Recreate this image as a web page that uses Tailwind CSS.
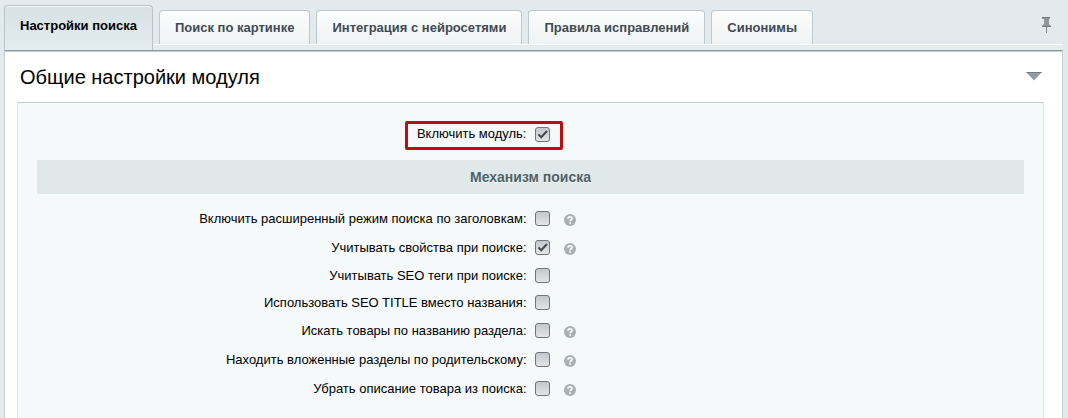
<!DOCTYPE html>
<html lang="ru">
<head>
  <meta charset="UTF-8" />
  <meta name="viewport" content="width=device-width, initial-scale=1.0" />
  <title>Настройки поиска</title>
  <script src="https://cdn.jsdelivr.net/npm/@tailwindcss/browser@4"></script>
</head>
<body class="min-h-screen flex flex-col bg-[#e2eaed] pl-1 pr-[5px] font-['Liberation_Sans',Arial,sans-serif] text-[13px] text-black">
  <svg class="hidden">
    <symbol id="check" viewBox="0 0 15 15">
      <path d="M3.4 7.4 L6.2 10.2 L12 4" fill="none" stroke="#45494d" stroke-width="2" />
    </symbol>
    <symbol id="help" viewBox="0 0 12 12">
      <circle cx="6" cy="6" r="6" fill="#a9b0b3" />
      <path d="M4 4.8 C4 2.2 8.1 2.2 8.1 4.5 C8.1 5.8 6.1 5.7 6.1 7.3" fill="none" stroke="#fff" stroke-width="1.6" />
      <rect x="5.3" y="8.2" width="1.6" height="1.6" fill="#fff" />
    </symbol>
  </svg>

  <!-- Вкладки -->
  <nav class="relative flex items-end gap-[6px] h-[50px] pb-[6px] text-[#3f4b54] font-bold">
    <div class="absolute inset-x-0 bottom-0 h-[6px] border-t border-white bg-[#e4edee]"></div>
    <button class="relative -mb-[6px] h-[45px] px-[15px] pb-1 rounded-t border border-b-0 border-[#b9c4c9] bg-linear-to-b from-[#d7e0e3] to-[#e4edef] text-black shadow-[inset_0_1px_0_#f4f8f9]">Настройки поиска</button>
    <button class="h-[34px] px-[15px] rounded-t border border-b-0 border-[#bcc8cc] bg-linear-to-b from-[#fcfdfd] to-[#eff3f4]">Поиск по картинке</button>
    <button class="h-[34px] px-[15px] rounded-t border border-b-0 border-[#bcc8cc] bg-linear-to-b from-[#fcfdfd] to-[#eff3f4]">Интеграция с нейросетями</button>
    <button class="h-[34px] px-[15px] rounded-t border border-b-0 border-[#bcc8cc] bg-linear-to-b from-[#fcfdfd] to-[#eff3f4]">Правила исправлений</button>
    <button class="h-[34px] px-[15px] rounded-t border border-b-0 border-[#bcc8cc] bg-linear-to-b from-[#fcfdfd] to-[#eff3f4]">Синонимы</button>
    <button class="ml-auto mr-3 mb-[11px]" aria-label="Закрепить">
      <svg class="block w-[10px] h-4" viewBox="0 0 10 16">
        <path d="M1 0 H9 V2 H8 V7 L10 9 V10 H1 V9 L3 7 V2 H1 Z" fill="#8d979b" />
        <path d="M1 0 H9 V1 H1 Z M1 9 H10 V10 H1 Z" fill="#727b80" />
        <path d="M5 10 H6 V16 H5 Z" fill="#7f898d" />
      </svg>
    </button>
  </nav>

  <main class="grow flex flex-col bg-white border-x border-t border-x-[#c3cfd2] border-t-[#8e999d] shadow-[inset_0_1px_0_#c9cfd1]">
    <header class="flex items-center justify-between h-[51px] pl-[15px] pr-5">
      <h1 class="text-[20px] leading-6">Общие настройки модуля</h1>
      <button aria-label="Свернуть">
        <svg class="block w-4 h-[9px]" viewBox="0 0 16 9">
          <path d="M0 0 H16 L8 8.5 Z" fill="#949da1" />
          <path d="M0 0 H16 L15 1 H1 Z" fill="#747c80" />
        </svg>
      </button>
    </header>

    <form class="grow ml-3 mr-[18px] px-[19px] pt-[17px] bg-[#f5f9fa] border-x border-t border-x-[#dce5e7] border-t-[#c4ced2]">
      <div class="relative grid grid-cols-2 items-center h-7 mb-3">
        <label for="enabled" class="justify-self-end pr-1">Включить модуль:</label>
        <div class="relative flex items-center pl-1">
          <input id="enabled" type="checkbox" checked class="peer appearance-none size-[15px] rounded-[3px] border border-[#6f777d] bg-linear-to-b from-[#c3c8cb] to-[#e2e5e6]" />
          <svg class="hidden peer-checked:block absolute left-1 size-[15px] pointer-events-none"><use href="#check" /></svg>
        </div>
        <!-- рамка вокруг главного переключателя -->
        <div class="absolute left-1/2 -ml-[126px] top-px -bottom-[2px] w-[158px] rounded-[2px] border-3 border-[#b90e12] pointer-events-none"></div>
      </div>

      <h2 class="h-[34px] mb-[10px] flex items-center justify-center bg-[#e0e8ea] text-[14px] font-bold text-[#4b6267] [text-shadow:0_1px_0_#fff]">Механизм поиска</h2>

      <div class="grid grid-cols-2 items-center h-[29px]">
        <label for="titles" class="justify-self-end pr-1">Включить расширенный режим поиска по заголовкам:</label>
        <div class="relative flex items-center pl-1">
          <input id="titles" type="checkbox" class="peer appearance-none size-[15px] rounded-[3px] border border-[#6f777d] bg-linear-to-b from-[#c3c8cb] to-[#e2e5e6]" />
          <svg class="hidden peer-checked:block absolute left-1 size-[15px] pointer-events-none"><use href="#check" /></svg>
          <svg class="size-3 ml-[14px] mt-[2px]"><use href="#help" /></svg>
        </div>
      </div>
      <div class="grid grid-cols-2 items-center h-[29px]">
        <label for="props" class="justify-self-end pr-1">Учитывать свойства при поиске:</label>
        <div class="relative flex items-center pl-1">
          <input id="props" type="checkbox" checked class="peer appearance-none size-[15px] rounded-[3px] border border-[#6f777d] bg-linear-to-b from-[#c3c8cb] to-[#e2e5e6]" />
          <svg class="hidden peer-checked:block absolute left-1 size-[15px] pointer-events-none"><use href="#check" /></svg>
          <svg class="size-3 ml-[14px] mt-[2px]"><use href="#help" /></svg>
        </div>
      </div>
      <div class="grid grid-cols-2 items-center h-[27px]">
        <label for="tags" class="justify-self-end pr-1">Учитывать SEO теги при поиске:</label>
        <div class="relative flex items-center pl-1">
          <input id="tags" type="checkbox" class="peer appearance-none size-[15px] rounded-[3px] border border-[#6f777d] bg-linear-to-b from-[#c3c8cb] to-[#e2e5e6]" />
          <svg class="hidden peer-checked:block absolute left-1 size-[15px] pointer-events-none"><use href="#check" /></svg>
        </div>
      </div>
      <div class="grid grid-cols-2 items-center h-[27px]">
        <label for="seo-title" class="justify-self-end pr-1">Использовать SEO TITLE вместо названия:</label>
        <div class="relative flex items-center pl-1">
          <input id="seo-title" type="checkbox" class="peer appearance-none size-[15px] rounded-[3px] border border-[#6f777d] bg-linear-to-b from-[#c3c8cb] to-[#e2e5e6]" />
          <svg class="hidden peer-checked:block absolute left-1 size-[15px] pointer-events-none"><use href="#check" /></svg>
        </div>
      </div>
      <div class="grid grid-cols-2 items-center h-[29px]">
        <label for="section" class="justify-self-end pr-1">Искать товары по названию раздела:</label>
        <div class="relative flex items-center pl-1">
          <input id="section" type="checkbox" class="peer appearance-none size-[15px] rounded-[3px] border border-[#6f777d] bg-linear-to-b from-[#c3c8cb] to-[#e2e5e6]" />
          <svg class="hidden peer-checked:block absolute left-1 size-[15px] pointer-events-none"><use href="#check" /></svg>
          <svg class="size-3 ml-[14px] mt-[2px]"><use href="#help" /></svg>
        </div>
      </div>
      <div class="grid grid-cols-2 items-center h-[29px]">
        <label for="nested" class="justify-self-end pr-1">Находить вложенные разделы по родительскому:</label>
        <div class="relative flex items-center pl-1">
          <input id="nested" type="checkbox" class="peer appearance-none size-[15px] rounded-[3px] border border-[#6f777d] bg-linear-to-b from-[#c3c8cb] to-[#e2e5e6]" />
          <svg class="hidden peer-checked:block absolute left-1 size-[15px] pointer-events-none"><use href="#check" /></svg>
          <svg class="size-3 ml-[14px] mt-[2px]"><use href="#help" /></svg>
        </div>
      </div>
      <div class="grid grid-cols-2 items-center h-[29px]">
        <label for="descr" class="justify-self-end pr-1">Убрать описание товара из поиска:</label>
        <div class="relative flex items-center pl-1">
          <input id="descr" type="checkbox" class="peer appearance-none size-[15px] rounded-[3px] border border-[#6f777d] bg-linear-to-b from-[#c3c8cb] to-[#e2e5e6]" />
          <svg class="hidden peer-checked:block absolute left-1 size-[15px] pointer-events-none"><use href="#check" /></svg>
          <svg class="size-3 ml-[14px] mt-[2px]"><use href="#help" /></svg>
        </div>
      </div>
    </form>
  </main>
</body>
</html>
